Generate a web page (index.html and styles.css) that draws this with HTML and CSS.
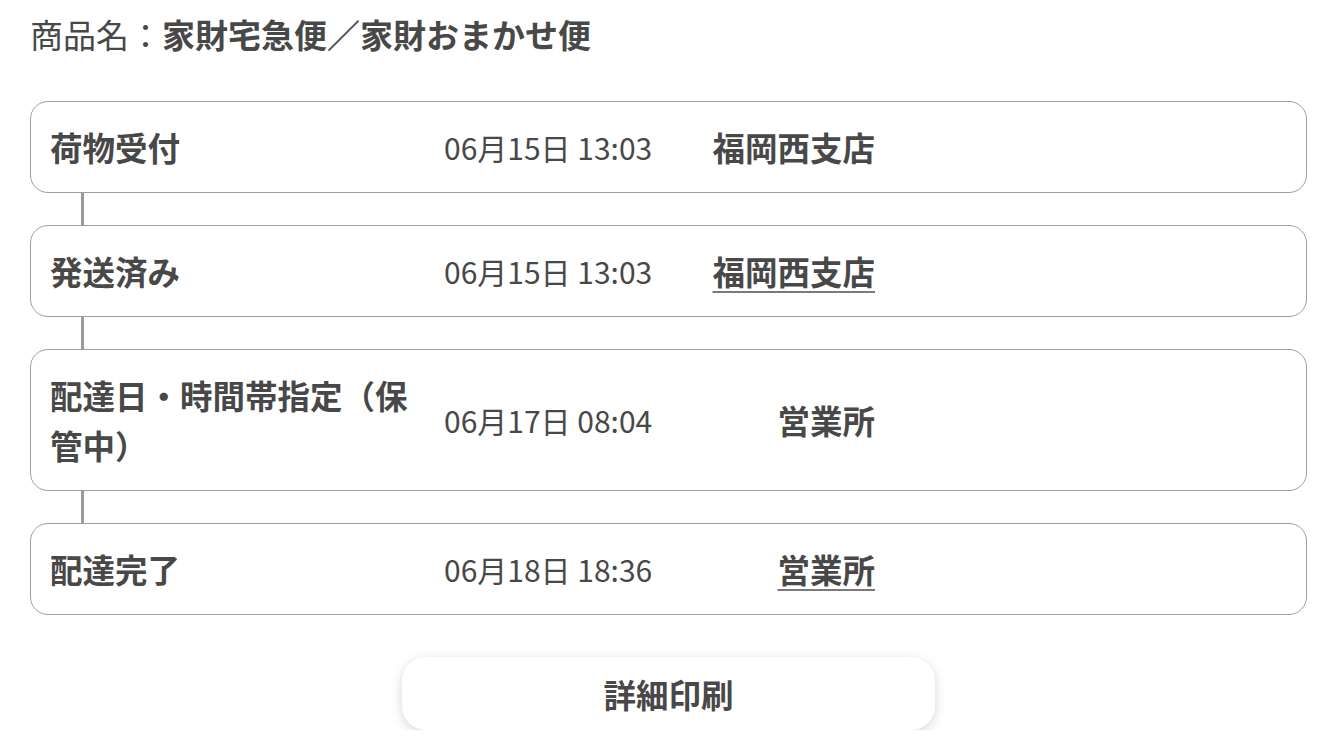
FILE: index.html
```html
<!DOCTYPE html>
<html lang="ja">
<head>
<meta charset="utf-8">
<title>配達状況</title>
<link rel="stylesheet" href="styles.css">
</head>
<body>
<div class="page">
  <h1 class="product"><span class="product-label">商品名：</span><span class="product-name">家財宅急便／家財おまかせ便</span></h1>
  <div class="timeline">
    <div class="card">
      <div class="status">荷物受付</div>
      <div class="date">06月15日 13:03</div>
      <div class="place">福岡西支店</div>
    </div>
    <div class="connector"></div>
    <div class="card">
      <div class="status">発送済み</div>
      <div class="date">06月15日 13:03</div>
      <div class="place"><a class="place-link" href="#">福岡西支店</a></div>
    </div>
    <div class="connector"></div>
    <div class="card">
      <div class="status">配達日・時間帯指定（保管中）</div>
      <div class="date">06月17日 08:04</div>
      <div class="place">営業所</div>
    </div>
    <div class="connector"></div>
    <div class="card">
      <div class="status">配達完了</div>
      <div class="date">06月18日 18:36</div>
      <div class="place"><a class="place-link" href="#">営業所</a></div>
    </div>
  </div>
  <div class="actions">
    <button class="print-btn" type="button">詳細印刷</button>
  </div>
</div>
</body>
</html>
```

FILE: styles.css
```css
* { box-sizing: border-box; }
html, body {
  margin: 0;
  padding: 0;
  background: #ffffff;
}
body {
  font-family: "Noto Sans CJK JP", "Noto Sans", sans-serif;
  color: #484848;
}
.page {
  padding: 10px 25px 0 30px;
}
.product {
  margin: 0;
  font-size: 33px;
  line-height: 48px;
  font-weight: 400;
}
.product-name {
  font-weight: 700;
}
.timeline {
  margin-top: 43px;
  display: flex;
  flex-direction: column;
}
.card {
  border: 1px solid #9e9e9e;
  border-radius: 18px;
  padding: 20px 19px;
  display: grid;
  grid-template-columns: 394px 230px 201px;
  align-items: center;
}
.status {
  font-size: 32.5px;
  line-height: 50px;
  font-weight: 700;
  padding-right: 30px;
}
.date {
  font-size: 30px;
  line-height: 50px;
  font-weight: 400;
  white-space: nowrap;
}
.place {
  font-size: 32.5px;
  line-height: 50px;
  font-weight: 700;
  text-align: right;
  white-space: nowrap;
}
.place-link {
  color: #484848;
  text-decoration: underline;
  text-decoration-color: #7a7a7a;
  text-underline-offset: 6px;
  text-decoration-thickness: 2px;
}
.connector {
  width: 3px;
  height: 32px;
  margin-left: 51px;
  background: #9a9a9a;
}
.actions {
  display: flex;
  justify-content: center;
  margin-top: 42px;
}
.print-btn {
  width: 533px;
  height: 73px;
  border: none;
  border-radius: 24px;
  background: #ffffff;
  box-shadow: 0 3px 12px rgba(0, 0, 0, 0.16);
  font-family: "Noto Sans CJK JP", "Noto Sans", sans-serif;
  font-size: 32.5px;
  font-weight: 700;
  color: #484848;
  cursor: pointer;
}
```
